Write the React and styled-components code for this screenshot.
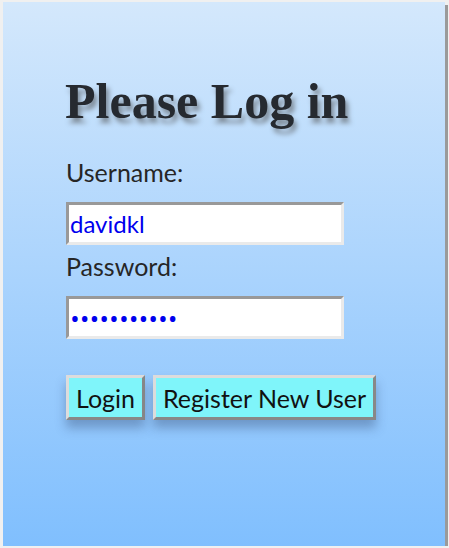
import styled, { createGlobalStyle } from "styled-components";

const Global = createGlobalStyle`
  html, body {
    margin: 0;
    padding: 0;
    background: #f0f0f0;
  }
`;

const Panel = styled.div`
  box-sizing: border-box;
  margin: 2px 0 0 3px;
  width: 442px;
  height: 544px;
  background: linear-gradient(#d4e8fc, #80bffe);
  box-shadow: 3px 3px 0 #9a9a9a;
  padding: 69px 0 0 63px;
  font-family: Lato, "Open Sans", sans-serif;
`;

const Title = styled.h1`
  margin: 0 0 25px -1px;
  font-family: "Liberation Serif", "Times New Roman", serif;
  font-size: 50px;
  font-weight: bold;
  color: #262a30;
  text-shadow: 3px 5px 5px #7f8c99;
  line-height: 60px;
`;

const Label = styled.label`
  display: block;
  font-size: 25px;
  color: #262626;
  line-height: 32px;
`;

const Input = styled.input`
  box-sizing: border-box;
  display: block;
  width: 278px;
  height: 43px;
  margin: 14px 0 5px;
  padding: 0 1px;
  border: 3px solid;
  border-color: #999 #eaeaea #eaeaea #999;
  background: #fff;
  color: #0000ee;
  font-family: ${(p) => (p.type === "password" ? '"Open Sans", sans-serif' : 'Lato, sans-serif')};
  font-size: ${(p) => (p.type === "password" ? 26 : 24)}px;
  outline: none;
`;

const Buttons = styled.div`
  display: flex;
  gap: 8px;
  margin-top: 36px;
`;

const Button = styled.button`
  box-sizing: border-box;
  height: 45px;
  padding: 0 7px;
  border: 3px solid;
  border-color: #dcdcdc #888 #888 #dcdcdc;
  background: #7ff5fa;
  color: #111;
  font-family: Lato, "Open Sans", sans-serif;
  font-size: 25px;
  box-shadow: 0 8px 10px rgba(40, 60, 100, 0.35);
`;

export default function App() {
  return (
    <>
      <Global />
      <Panel>
        <Title>Please Log in</Title>
        <Label>Username:</Label>
        <Input defaultValue="davidkl" />
        <Label>Password:</Label>
        <Input type="password" defaultValue="davidkl1234" />
        <Buttons>
          <Button>Login</Button>
          <Button>Register New User</Button>
        </Buttons>
      </Panel>
    </>
  );
}
